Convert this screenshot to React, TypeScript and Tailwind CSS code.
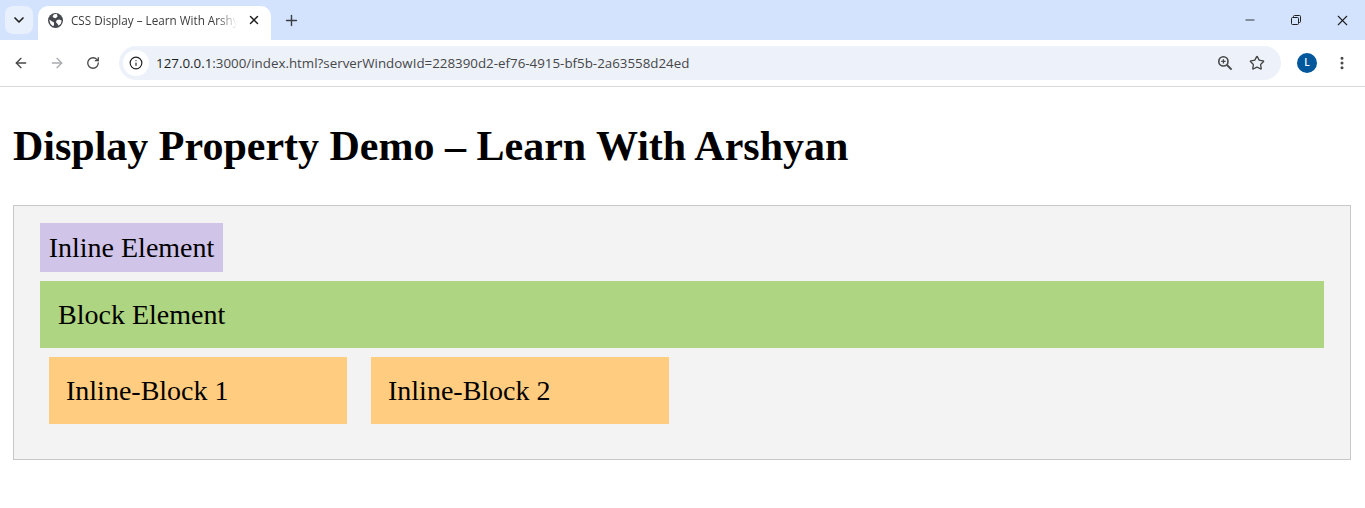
import { ArrowLeft, ArrowRight, ChevronDown, Plus, RotateCw, Star, X, Minus, EllipsisVertical, Info } from 'lucide-react';

function RestoreIcon() {
  return (
    <svg width="12" height="12" viewBox="0 0 12 12" fill="none" stroke="#1f1f1f" strokeWidth="1">
      <rect x="1.5" y="3.5" width="7" height="7" rx="1" />
      <path d="M3.5 3.5V2.5a1 1 0 0 1 1-1h5a1 1 0 0 1 1 1v5a1 1 0 0 1-1 1h-1" />
    </svg>
  );
}

function GlobeIcon() {
  return (
    <svg width="15" height="15" viewBox="0 0 15 15" className="shrink-0">
      <circle cx="7.5" cy="7.5" r="7.5" fill="#45494f" />
      <path d="M6 1.2 8.8 1.1 9.6 3.4 7.6 5.2 5.6 4.8 4.6 3.2Z" fill="#ffffff" />
      <path d="M8.6 7.2 11.2 6.4 13.6 7.4 13 10.4 10.6 12.8 9.6 11 8 9.2Z" fill="#ffffff" />
      <path d="M1.2 6.6 3.8 8.2 6 9.4 6 12.6 4.6 13 2.4 10.8Z" fill="#ffffff" />
    </svg>
  );
}

function PageZoomIcon() {
  return (
    <svg width="16" height="16" viewBox="0 0 16 16" fill="none" stroke="#454746" strokeWidth="1.6">
      <circle cx="6.4" cy="6.4" r="4.6" />
      <path d="M10 10 14.6 14.6" strokeWidth="1.9" />
      <path d="M4.2 6.4h4.4M6.4 4.2v4.4" strokeWidth="1.3" />
    </svg>
  );
}

function BrowserChrome() {
  return (
    <div className="font-['Open_Sans','Noto_Sans',sans-serif]">
      {/* Tab strip */}
      <div className="flex h-10 items-end bg-[#d3e3fd] text-[#1f1f1f]">
        <div className="mb-[6px] ml-[5px] flex h-[28px] w-[28px] items-center justify-center rounded-lg bg-[#e9f0fd]">
          <ChevronDown className="h-4 w-4" strokeWidth={2.5} />
        </div>
        <div className="ml-[5px] flex h-[34px] w-[233px] items-center rounded-t-[10px] bg-white pb-[6px] pl-[10px] pr-[10px]">
          <GlobeIcon />
          <span className="ml-[8px] w-[166px] overflow-hidden whitespace-nowrap text-[11.7px] leading-4 text-[#3c3c3c] [mask-image:linear-gradient(to_right,black_88%,transparent)]">
            CSS Display – Learn With Arshyan
          </span>
          <X className="ml-auto h-[14px] w-[14px]" strokeWidth={2.5} />
        </div>
        <div className="mb-[6px] ml-[6px] flex h-7 w-7 items-center justify-center">
          <Plus className="h-[17px] w-[17px] text-[#3b3f45]" strokeWidth={2} />
        </div>
        <div className="ml-auto flex h-10 items-center">
          <div className="flex w-[46px] justify-center"><Minus className="h-[14px] w-[14px]" strokeWidth={1.5} /></div>
          <div className="flex w-[46px] justify-center"><RestoreIcon /></div>
          <div className="flex w-[46px] justify-center"><X className="h-[17px] w-[17px]" strokeWidth={1.5} /></div>
        </div>
      </div>
      {/* Toolbar */}
      <div className="flex h-[47px] items-center border-b border-[#d9d9d9] bg-white pb-[1px] text-[#454746]">
        <div className="flex w-[38px] justify-end pr-[9px]"><ArrowLeft className="h-[16px] w-[16px]" strokeWidth={2} /></div>
        <div className="flex w-[37px] justify-center"><ArrowRight className="h-[16px] w-[16px] text-[#a8abaf]" strokeWidth={2} /></div>
        <div className="flex w-[36px] justify-center"><RotateCw className="h-[14px] w-[14px]" strokeWidth={2.25} /></div>
        <div className="ml-[8px] flex h-[34px] w-[1162px] items-center rounded-full bg-[#edf2fa] pl-[4px] pr-[16px]">
          <div className="flex h-[26px] w-[26px] items-center justify-center rounded-full bg-white">
            <Info className="h-[14px] w-[14px] text-[#1f1f1f]" strokeWidth={2} />
          </div>
          <span className="ml-[7px] text-[13.35px] leading-4 text-[#1f1f1f]">
            127.0.0.1<span className="text-[#474747]">:3000/index.html?serverWindowId=228390d2-ef76-4915-bf5b-2a63558d24ed</span>
          </span>
          <span className="ml-auto"><PageZoomIcon /></span>
          <Star className="ml-[16px] h-[16px] w-[16px]" strokeWidth={2} />
        </div>
        <div className="ml-[16px] flex h-5 w-5 items-center justify-center rounded-full bg-[#00579b] text-[10px] font-semibold text-white">L</div>
        <EllipsisVertical className="ml-[17px] h-[16px] w-[16px]" strokeWidth={2.5} />
      </div>
    </div>
  );
}

export default function App() {
  return (
    <div className="h-[508px] overflow-hidden bg-white text-black">
      <BrowserChrome />
      <main className="pl-[13px] pr-[14px] font-['Liberation_Serif',serif]">
        <h1 className="mt-[35px] text-[42px] font-bold leading-[48px]">Display Property Demo – Learn With Arshyan</h1>
        <div className="mt-[35px] h-[255px] border border-[#c8c8c8] bg-[#f3f3f3] pl-[26px] pr-[26px] pt-[17px] text-[28px]">
          <div className="flex h-[49px] w-[183px] items-center justify-center bg-[#d1c4e9]">Inline Element</div>
          <div className="mt-[9px] flex h-[67px] items-center bg-[#aed581] pl-[18px]">Block Element</div>
          <div className="ml-[9px] mt-[9px] flex gap-6">
            <div className="flex h-[67px] w-[298px] items-center bg-[#ffcc80] pl-[17px]">Inline-Block 1</div>
            <div className="flex h-[67px] w-[298px] items-center bg-[#ffcc80] pl-[17px]">Inline-Block 2</div>
          </div>
        </div>
      </main>
    </div>
  );
}
